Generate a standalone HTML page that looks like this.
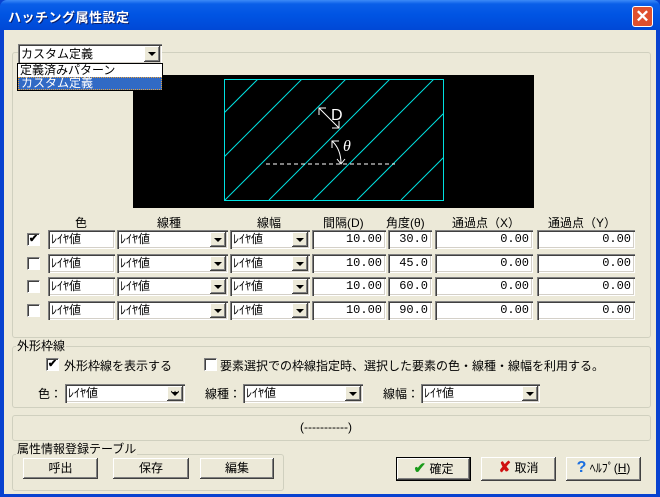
<!DOCTYPE html>
<html><head><meta charset="utf-8"><style>
*{margin:0;padding:0;box-sizing:border-box}
body{width:660px;height:497px;overflow:hidden;background:#0842d0;font-family:"Liberation Sans","Noto Sans CJK JP",sans-serif;font-size:12px;color:#000;position:relative}
.a{position:absolute}
#title{left:0;top:0;width:660px;height:30px;background:linear-gradient(#3d8af7 0,#0a5fe8 4px,#0054e3 50%,#0048d6 100%);border-radius:7px 7px 0 0}
#client{left:4px;top:30px;width:652px;height:464px;background:#ece9d8}
.grp{position:absolute;border:1px solid #d0d0bf;border-radius:3px}
.lbl{position:absolute;background:#ece9d8;padding:0 1px;line-height:14px;white-space:nowrap}
.f{position:absolute;background:#fff;box-shadow:inset 1px 1px #808080,inset 2px 2px #404040,inset -1px -1px #fff,inset -2px -2px #d4d0c8;line-height:18px;padding:0 3px;white-space:nowrap;overflow:hidden}
.n{text-align:right;font-family:"Liberation Mono",monospace;font-size:12px;padding-right:4px}
.db{position:absolute;right:2px;top:2px;bottom:2px;width:16px;background:#ece9d8;box-shadow:inset -1px -1px #404040,inset 1px 1px #fff,inset -2px -2px #808080}
.db:after{content:"";position:absolute;left:4px;top:6px;border-left:4px solid transparent;border-right:4px solid transparent;border-top:4px solid #000}
.cb{position:absolute;width:13px;height:13px;background:#fff;border:1px solid #1c5180;border-color:#808080 #fff #fff #808080;box-shadow:inset 1px 1px #404040}
.btn{position:absolute;background:#ece9d8;box-shadow:inset -1px -1px #404040,inset 1px 1px #fff,inset -2px -2px #808080;text-align:center;line-height:22px}
.h{position:absolute;top:214px;white-space:nowrap}
</style></head><body>
<div id="title" class="a"></div>
<div class="a" style="left:8px;top:7px;color:#fff;font-weight:bold;font-size:13px;text-shadow:1px 1px #0a1e6a;letter-spacing:0.5px">ハッチング属性設定</div>
<div class="a" style="left:632px;top:6px;width:21px;height:21px;background:#e0502e;border:1px solid #fff;border-radius:3px;color:#fff;font-size:17px;font-weight:bold;line-height:19px;text-align:center">✕</div>
<div id="client" class="a"></div>

<div class="grp" style="left:12px;top:52px;width:639px;height:286px"></div>
<div class="a" style="left:133px;top:75px;width:401px;height:133px;background:#000"></div>
<svg class="a" style="left:133px;top:75px" width="401" height="133">
<defs><clipPath id="c"><rect x="91" y="4" width="219" height="121"/></clipPath></defs>
<g clip-path="url(#c)" stroke="#00e0e0" stroke-width="1">
<line x1="81" y1="4" x2="-40" y2="125"/><line x1="125" y1="4" x2="4" y2="125"/><line x1="169" y1="4" x2="48" y2="125"/><line x1="213" y1="4" x2="92" y2="125"/><line x1="257" y1="4" x2="136" y2="125"/><line x1="301" y1="4" x2="180" y2="125"/><line x1="345" y1="4" x2="224" y2="125"/><line x1="389" y1="4" x2="268" y2="125"/><line x1="433" y1="4" x2="312" y2="125"/><line x1="477" y1="4" x2="356" y2="125"/>
</g>
<rect x="91.5" y="4.5" width="219" height="121" fill="none" stroke="#00e0e0"/>
<line x1="133" y1="89" x2="262" y2="89" stroke="#fff" stroke-dasharray="4,3"/>
<g stroke="#fff" fill="none">
<line x1="186" y1="33" x2="206" y2="53"/><polyline points="186,40 186,33 193,33"/><polyline points="199,53 206,53 206,46"/>
<path d="M199 66 Q208 74 208 89"/><polyline points="199,73 199,66 206,66"/><polyline points="204,84 208,89 212,84"/>
</g>
<text x="198" y="45" fill="#fff" font-family="Liberation Sans" font-size="16">D</text>
<text x="210" y="76" fill="#fff" font-family="Liberation Serif" font-style="italic" font-size="16">θ</text>
</svg>
<div class="f" style="left:18px;top:44px;width:144px;height:20px;line-height:20px">カスタム定義<div class="db"></div></div>
<div class="a" style="left:17px;top:63px;width:146px;height:28px;background:#fff;border:1px solid #000"></div>
<div class="a" style="left:20px;top:63px;line-height:14px">定義済みパターン</div>
<div class="a" style="left:18px;top:77px;width:144px;height:13px;background:#316ac5;border:1px dotted #e0a040;color:#fff;line-height:11px;padding-left:2px">カスタム定義</div>

<div class="h" style="left:75px">色</div>
<div class="h" style="left:157px">線種</div>
<div class="h" style="left:257px">線幅</div>
<div class="h" style="left:323px">間隔(D)</div>
<div class="h" style="left:386px">角度(θ)</div>
<div class="h" style="left:452px">通過点（X）</div>
<div class="h" style="left:548px">通過点（Y）</div>

<div class="cb" style="left:27px;top:233px;font-size:11px;line-height:10px;text-align:center;font-weight:bold">✔</div>
<div class="f" style="left:48px;top:230px;width:67px;height:19px">ﾚｲﾔ値</div>
<div class="f" style="left:117px;top:230px;width:111px;height:19px">ﾚｲﾔ値<div class="db"></div></div>
<div class="f" style="left:230px;top:230px;width:80px;height:19px">ﾚｲﾔ値<div class="db"></div></div>
<div class="f n" style="left:312px;top:230px;width:74px;height:19px">10.00</div>
<div class="f n" style="left:388px;top:230px;width:44px;height:19px">30.0</div>
<div class="f n" style="left:435px;top:230px;width:98px;height:19px">0.00</div>
<div class="f n" style="left:537px;top:230px;width:98px;height:19px">0.00</div>

<div class="cb" style="left:27px;top:257px"></div>
<div class="f" style="left:48px;top:254px;width:67px;height:19px">ﾚｲﾔ値</div>
<div class="f" style="left:117px;top:254px;width:111px;height:19px">ﾚｲﾔ値<div class="db"></div></div>
<div class="f" style="left:230px;top:254px;width:80px;height:19px">ﾚｲﾔ値<div class="db"></div></div>
<div class="f n" style="left:312px;top:254px;width:74px;height:19px">10.00</div>
<div class="f n" style="left:388px;top:254px;width:44px;height:19px">45.0</div>
<div class="f n" style="left:435px;top:254px;width:98px;height:19px">0.00</div>
<div class="f n" style="left:537px;top:254px;width:98px;height:19px">0.00</div>

<div class="cb" style="left:27px;top:280px"></div>
<div class="f" style="left:48px;top:277px;width:67px;height:19px">ﾚｲﾔ値</div>
<div class="f" style="left:117px;top:277px;width:111px;height:19px">ﾚｲﾔ値<div class="db"></div></div>
<div class="f" style="left:230px;top:277px;width:80px;height:19px">ﾚｲﾔ値<div class="db"></div></div>
<div class="f n" style="left:312px;top:277px;width:74px;height:19px">10.00</div>
<div class="f n" style="left:388px;top:277px;width:44px;height:19px">60.0</div>
<div class="f n" style="left:435px;top:277px;width:98px;height:19px">0.00</div>
<div class="f n" style="left:537px;top:277px;width:98px;height:19px">0.00</div>

<div class="cb" style="left:27px;top:304px"></div>
<div class="f" style="left:48px;top:301px;width:67px;height:19px">ﾚｲﾔ値</div>
<div class="f" style="left:117px;top:301px;width:111px;height:19px">ﾚｲﾔ値<div class="db"></div></div>
<div class="f" style="left:230px;top:301px;width:80px;height:19px">ﾚｲﾔ値<div class="db"></div></div>
<div class="f n" style="left:312px;top:301px;width:74px;height:19px">10.00</div>
<div class="f n" style="left:388px;top:301px;width:44px;height:19px">90.0</div>
<div class="f n" style="left:435px;top:301px;width:98px;height:19px">0.00</div>
<div class="f n" style="left:537px;top:301px;width:98px;height:19px">0.00</div>

<div class="grp" style="left:12px;top:346px;width:639px;height:62px"></div>
<div class="lbl" style="left:16px;top:339px">外形枠線</div>
<div class="cb" style="left:46px;top:358px;font-size:11px;line-height:10px;text-align:center;font-weight:bold">✔</div>
<div class="a" style="left:64px;top:357px">外形枠線を表示する</div>
<div class="cb" style="left:204px;top:358px"></div>
<div class="a" style="left:220px;top:357px">要素選択での枠線指定時、選択した要素の色・線種・線幅を利用する。</div>
<div class="a" style="left:38px;top:385px">色：</div>
<div class="f" style="left:65px;top:384px;width:120px;height:19px">ﾚｲﾔ値<div class="db" style="font-size:10px;line-height:12px;text-align:center">···</div></div>
<div class="a" style="left:205px;top:385px">線種：</div>
<div class="f" style="left:243px;top:384px;width:120px;height:19px">ﾚｲﾔ値<div class="db"></div></div>
<div class="a" style="left:383px;top:385px">線幅：</div>
<div class="f" style="left:421px;top:384px;width:119px;height:19px">ﾚｲﾔ値<div class="db"></div></div>

<div class="grp" style="left:12px;top:415px;width:639px;height:26px"></div>
<div class="a" style="left:300px;top:420px">(-----------)</div>

<div class="grp" style="left:12px;top:454px;width:272px;height:37px"></div>
<div class="lbl" style="left:16px;top:442px">属性情報登録テーブル</div>
<div class="btn" style="left:23px;top:458px;width:75px;height:21px;line-height:21px">呼出</div>
<div class="btn" style="left:113px;top:458px;width:76px;height:21px;line-height:21px">保存</div>
<div class="btn" style="left:200px;top:458px;width:74px;height:21px;line-height:21px">編集</div>

<div class="btn" style="left:396px;top:457px;width:75px;height:24px;border:1px solid #000;line-height:22px"><span style="color:#1a9a1a;font-weight:bold;font-size:15px">✔</span> 確定</div>
<div class="btn" style="left:481px;top:457px;width:75px;height:24px"><span style="color:#d01010;font-weight:bold;font-size:15px">✘</span> 取消</div>
<div class="btn" style="left:566px;top:457px;width:75px;height:24px"><span style="color:#1a6ee0;font-weight:bold;font-size:16px">?</span> ﾍﾙﾌﾟ(<u>H</u>)</div>
</body></html>
